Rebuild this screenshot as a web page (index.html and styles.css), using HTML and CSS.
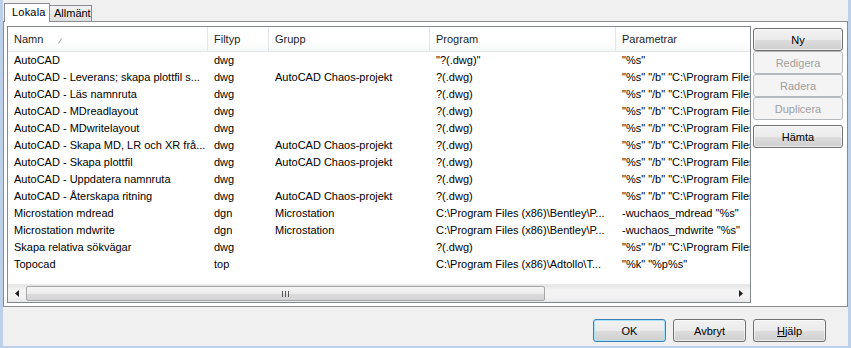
FILE: index.html
```html
<!DOCTYPE html>
<html lang="sv">
<head>
<meta charset="utf-8">
<title>Program</title>
<link rel="stylesheet" href="styles.css">
</head>
<body>
<div class="frame">
  <div class="tabs">
    <div class="tab active">Lokala</div>
    <div class="tab">Allmänt</div>
  </div>
  <div class="panel">
    <div class="list">
      <div class="header">
        <div class="hcell">Namn<svg class="sort" width="4" height="6" viewBox="0 0 4 6"><path d="M0.5 5.5 L3.5 0.5" stroke="#9a9a9a" stroke-width="1" fill="none"/></svg></div>
        <div class="hcell">Filtyp</div>
        <div class="hcell">Grupp</div>
        <div class="hcell">Program</div>
        <div class="hcell">Parametrar</div>
      </div>
      <div class="rows">
        <div class="row"><span>AutoCAD</span><span>dwg</span><span></span><span>"?(.dwg)"</span><span>"%s"</span></div>
        <div class="row"><span>AutoCAD - Leverans; skapa plottfil s...</span><span>dwg</span><span>AutoCAD Chaos-projekt</span><span>?(.dwg)</span><span>"%s" "/b" "C:\Program Files (x86)\</span></div>
        <div class="row"><span>AutoCAD - Läs namnruta</span><span>dwg</span><span></span><span>?(.dwg)</span><span>"%s" "/b" "C:\Program Files (x86)\</span></div>
        <div class="row"><span>AutoCAD - MDreadlayout</span><span>dwg</span><span></span><span>?(.dwg)</span><span>"%s" "/b" "C:\Program Files (x86)\</span></div>
        <div class="row"><span>AutoCAD - MDwritelayout</span><span>dwg</span><span></span><span>?(.dwg)</span><span>"%s" "/b" "C:\Program Files (x86)\</span></div>
        <div class="row"><span>AutoCAD - Skapa MD, LR och XR frå...</span><span>dwg</span><span>AutoCAD Chaos-projekt</span><span>?(.dwg)</span><span>"%s" "/b" "C:\Program Files (x86)\</span></div>
        <div class="row"><span>AutoCAD - Skapa plottfil</span><span>dwg</span><span>AutoCAD Chaos-projekt</span><span>?(.dwg)</span><span>"%s" "/b" "C:\Program Files (x86)\</span></div>
        <div class="row"><span>AutoCAD - Uppdatera namnruta</span><span>dwg</span><span></span><span>?(.dwg)</span><span>"%s" "/b" "C:\Program Files (x86)\</span></div>
        <div class="row"><span>AutoCAD - Återskapa ritning</span><span>dwg</span><span>AutoCAD Chaos-projekt</span><span>?(.dwg)</span><span>"%s" "/b" "C:\Program Files (x86)\</span></div>
        <div class="row"><span>Microstation mdread</span><span>dgn</span><span>Microstation</span><span>C:\Program Files (x86)\Bentley\P...</span><span>-wuchaos_mdread "%s"</span></div>
        <div class="row"><span>Microstation mdwrite</span><span>dgn</span><span>Microstation</span><span>C:\Program Files (x86)\Bentley\P...</span><span>-wuchaos_mdwrite "%s"</span></div>
        <div class="row"><span>Skapa relativa sökvägar</span><span>dwg</span><span></span><span>?(.dwg)</span><span>"%s" "/b" "C:\Program Files (x86)\</span></div>
        <div class="row"><span>Topocad</span><span>top</span><span></span><span>C:\Program Files (x86)\Adtollo\T...</span><span>"%k" "%p%s"</span></div>
      </div>
      <div class="hscroll">
        <div class="arrow"><svg width="4" height="7" viewBox="0 0 4 7"><path d="M4 0 L0 3.5 L4 7 Z" fill="#222"/></svg></div>
        <div class="track">
          <div class="thumb"><svg class="grip" width="7" height="6" viewBox="0 0 7 6"><path d="M0.5 0 V6 M3.5 0 V6 M6.5 0 V6" stroke="#555" stroke-width="1"/></svg></div>
        </div>
        <div class="arrow"><svg width="4" height="7" viewBox="0 0 4 7"><path d="M0 0 L4 3.5 L0 7 Z" fill="#222"/></svg></div>
      </div>
    </div>
    <div class="side">
      <button class="btn">Ny</button>
      <button class="btn" disabled>Redigera</button>
      <button class="btn" disabled>Radera</button>
      <button class="btn" disabled>Duplicera</button>
      <button class="btn gap">Hämta</button>
    </div>
  </div>
  <div class="footer">
    <button class="btn big default">OK</button>
    <button class="btn big">Avbryt</button>
    <button class="btn big"><u>H</u>jälp</button>
  </div>
</div>
</body>
</html>
```

FILE: styles.css
```css
html, body {
  margin: 0;
  padding: 0;
}
body {
  width: 851px;
  height: 348px;
  overflow: hidden;
  font-family: "Liberation Sans", Arial, sans-serif;
  font-size: 11px;
  color: #000;
  background: #f0f0f0;
}
.frame {
  box-sizing: border-box;
  width: 851px;
  height: 348px;
  border-left: 3px solid #bcd0ea;
  border-right: 3px solid #bcd0ea;
  border-bottom: 2px solid #bcd0ea;
  display: flex;
  flex-direction: column;
}
.tabs {
  display: flex;
  align-items: flex-end;
  height: 18px;
  padding-top: 3px;
  padding-left: 1px;
}
.tab {
  box-sizing: border-box;
  flex: none;
  height: 16px;
  line-height: 15px;
  border: 1px solid #898c95;
  border-bottom: none;
  position: relative;
  white-space: nowrap;
}
.tab.active {
  width: 46px;
  padding-left: 7px;
  height: 19px;
  line-height: 17px;
  background: #fff;
  margin-bottom: -1px;
  z-index: 1;
  letter-spacing: 0.2px;
}
.tab:not(.active) {
  width: 42px;
  padding-left: 4px;
  border-left: none;
  background: linear-gradient(#f2f2f2, #dedede);
}
.panel {
  box-sizing: border-box;
  height: 286px;
  border: 1px solid #898c95;
  background: #fff;
  display: flex;
  padding: 4px 4px 3px 3px;
}
.list {
  box-sizing: border-box;
  width: 745px;
  border: 1px solid #828790;
  display: flex;
  flex-direction: column;
  overflow: hidden;
}
.header {
  display: grid;
  grid-template-columns: 200px 61px 161px 186px 300px;
  height: 24px;
  border-bottom: 1px solid #e5e5e5;
  background: linear-gradient(#ffffff, #ffffff 60%, #f7f8f9);
  flex: none;
}
.hcell {
  box-sizing: border-box;
  padding-left: 6px;
  line-height: 25px;
  border-right: 1px solid #e3e5e8;
  white-space: nowrap;
  color: #1e1e1e;
}
.sort {
  margin-left: 15px;
  vertical-align: -1px;
}
.rows {
  flex: 1;
  overflow: hidden;
}
.row {
  display: grid;
  grid-template-columns: 200px 61px 161px 186px 300px;
  height: 17px;
  line-height: 17px;
}
.row span {
  padding-left: 6px;
  white-space: nowrap;
  overflow: hidden;
}
.hscroll {
  flex: none;
  height: 17px;
  display: flex;
  background: linear-gradient(#e6e6e6, #f3f3f3 30%, #f3f3f3 70%, #e8e8e8);
  border-top: 1px solid #e9e9e9;
}
.arrow {
  width: 18px;
  display: flex;
  align-items: center;
  justify-content: center;
  flex: none;
}
.track {
  flex: 1;
  padding: 1px 0;
  display: flex;
}
.thumb {
  box-sizing: border-box;
  width: 519px;
  border: 1px solid #a6a6a6;
  border-radius: 2px;
  background: linear-gradient(#f6f6f6, #ececec 50%, #dcdcdc 51%, #d4d4d4);
  display: flex;
  align-items: center;
  justify-content: center;
}
.side {
  display: flex;
  flex-direction: column;
  margin-left: 2px;
  padding-top: 2px;
}
.btn {
  box-sizing: border-box;
  width: 90px;
  height: 23px;
  margin: 0;
  padding: 0;
  font-family: "Liberation Sans", Arial, sans-serif;
  font-size: 11px;
  color: #000;
  border: 1px solid #707070;
  border-radius: 3px;
  background: linear-gradient(#f2f2f2, #ebebeb 50%, #dddddd 51%, #cfcfcf);
  box-shadow: inset 0 0 0 1px rgba(255,255,255,0.6);
}
.btn:disabled {
  color: #a0a0a0;
  border-color: #b5b9bc;
  background: #f4f4f4;
  box-shadow: none;
}
.btn.gap {
  margin-top: 5px;
}
.footer {
  display: flex;
  justify-content: flex-end;
  gap: 7px;
  padding: 12px 22px 0 0;
}
.btn.big {
  width: 73px;
}
.btn.default {
  border-color: #3c7fb1;
  box-shadow: inset 0 0 0 1px #a6e2f7;
}
```
